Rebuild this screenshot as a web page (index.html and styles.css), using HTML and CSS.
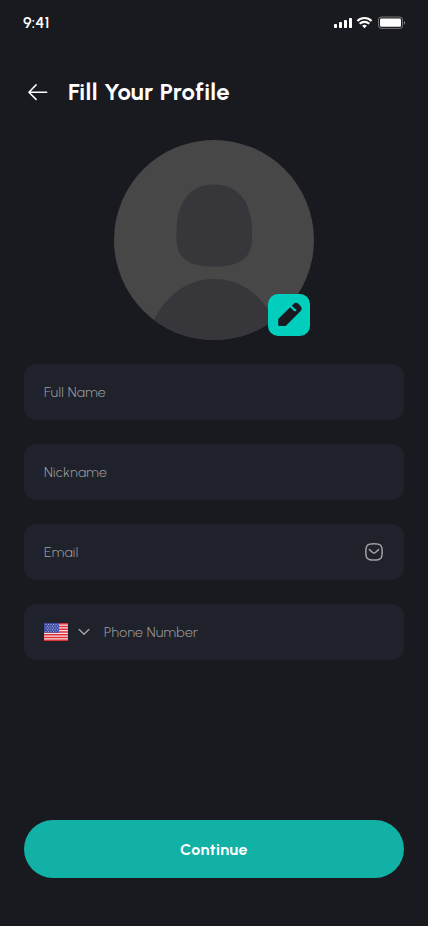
FILE: index.html
```
<!DOCTYPE html>
<html lang="en">
<head>
<meta charset="utf-8">
<meta name="viewport" content="width=device-width, initial-scale=1">
<title>Fill Your Profile</title>
<link rel="stylesheet" href="styles.css">
</head>
<body>
<main class="screen">
  <div class="status">
    <span class="time">9:41</span>
    <svg class="status-icons" width="74" height="14" viewBox="0 0 74 14">
      <g fill="#fff">
        <rect x="1" y="8" width="3" height="4" rx=".7"/>
        <rect x="6" y="6" width="3" height="6" rx=".7"/>
        <rect x="11" y="4" width="3" height="8" rx=".7"/>
        <rect x="16" y="2" width="3" height="10" rx=".7"/>
        <path d="M31.5 12.2 29.1 9.8a3.6 3.6 0 0 1 4.8 0z"/>
      </g>
      <g fill="none" stroke="#fff" stroke-width="2.1">
        <path d="M26.7 7.8a7 7 0 0 1 9.6 0"/>
        <path d="M24.4 4.9a10.3 10.3 0 0 1 14.2 0"/>
      </g>
      <rect x="45.5" y="1" width="24" height="11.4" rx="2.8" fill="none" stroke="#fff" stroke-opacity=".4"/>
      <rect x="47" y="2.6" width="21" height="8.2" rx="1.4" fill="#fff"/>
      <path d="M71 4.9v3.8c1.5-.5 1.5-3.3 0-3.8z" fill="#fff" fill-opacity=".45"/>
    </svg>
  </div>
  <header class="header">
    <svg width="20" height="18" viewBox="0 0 20 18" fill="none" stroke="#fff" stroke-width="1.5" stroke-linecap="round" stroke-linejoin="round"><path d="M18.7 9.2H.9M8.1 1.9.9 9.2l7.2 7.2"/></svg>
    <h1 class="title">Fill Your Profile</h1>
  </header>
  <div class="avatar">
    <svg width="200" height="200" viewBox="0 0 200 200">
      <defs><clipPath id="disc"><circle cx="100" cy="100" r="100"/></clipPath></defs>
      <g clip-path="url(#disc)">
        <rect width="200" height="200" fill="#474748"/>
        <path d="M100 44.5C76 44.5 62.5 62 62.5 92V99C62.5 119 76 126.700 100 126.700S138 119 138 99V92C138 62 124 44.500 100 44.500z" fill="#37363a"/>
        <path d="M38 184C50 157 72 139 100 139s50 18 62 45v16H38z" fill="#37363a"/>
      </g>
    </svg>
    <button class="edit" aria-label="Edit photo">
      <svg width="42" height="42" viewBox="0 0 42 42" fill="#191a1f">
        <path d="M10.2 25.9q0-1 .7-1.700L25.500 9.900q2.600-2.300 5.400.4l1.500 1.600q2.500 2.700 0 5.300L18.200 31.400q-.7.600-1.600.6h-5.200q-1.200 0-1.200-1.200z"/>
        <path d="m22.300 11.700 3.300 3.300q.9 1.200 1.700 1.200" fill="none" stroke="#02cebd" stroke-width="2.300" stroke-linecap="round"/>
      </svg>
    </button>
  </div>
  <form class="form">
    <div class="field"><span class="label">Full Name</span></div>
    <div class="field"><span class="label">Nickname</span></div>
    <div class="field">
      <span class="label">Email</span>
      <svg class="mail" width="20" height="20" viewBox="0 0 20 20" fill="none" stroke="#a2a3a6" stroke-width="1.500" stroke-linecap="round" stroke-linejoin="round"><path d="M10 1.700c6.600 0 8.200 1.600 8.200 8.200s-1.600 8.200-8.200 8.200-8.200-1.600-8.200-8.200S3.400 1.700 10 1.700z"/><path d="m5.400 7.600 3.200 2.900q1.400 1.200 2.800 0l3.200-2.900"/></svg>
    </div>
    <div class="field">
      <svg width="24" height="18" viewBox="0 0 24 18">
        <rect width="24" height="18" fill="#f7dfe0"/>
        <path d="M0 .7h24M0 3.460h24M0 6.230h24M0 9h24M0 11.770h24M0 14.540h24M0 17.310h24" stroke="#df3038" stroke-width="1.390"/>
        <rect width="15" height="9.700" fill="#3f4da5"/>
        <path d="M1.500 1.500h13M3 3.200h11M1.500 4.900h13M3 6.600h11M1.500 8.300h13" stroke="#b7bfe8" stroke-width=".9" stroke-dasharray="1 1.500"/>
      </svg>
      <svg class="chevron" width="12" height="8" viewBox="0 0 12 8" fill="none" stroke="#a2a3a6" stroke-width="1.500" stroke-linecap="round" stroke-linejoin="round"><path d="m1.200 1.500 4.800 4.800 4.800-4.800"/></svg>
      <span class="label">Phone Number</span>
    </div>
  </form>
  <button class="continue">Continue</button>
</main>
</body>
</html>
```
FILE: styles.css
```
* { box-sizing: border-box; }
body { margin: 0; background: #191a1f; }
button { border: 0; padding: 0; font: inherit; }
svg { display: block; flex: none; }
.screen {
  width: 428px;
  height: 926px;
  padding: 0 24px 48px;
  display: flex;
  flex-direction: column;
  background: #191a1f;
  color: #fff;
  font-family: Urbanist, Lato, sans-serif;
}
.status {
  height: 44px;
  margin: 0 -3px 0 -1px;
  display: flex;
  align-items: center;
  justify-content: space-between;
}
.time { font-size: 16px; font-weight: 600; letter-spacing: .1px; }
.status-icons { margin-top: 2px; }
.header {
  height: 48px;
  margin-top: 24px;
  padding-left: 4px;
  display: flex;
  align-items: center;
  gap: 20px;
}
.title { margin: 0; font-size: 24px; line-height: 30px; font-weight: 700; letter-spacing: .34px; white-space: nowrap; }
.avatar { position: relative; width: 200px; height: 200px; margin: 24px auto 0; }
.edit {
  position: absolute;
  left: 154px;
  top: 154px;
  width: 42px;
  height: 42px;
  border-radius: 10px;
  background: #02cebd;
}
.form { margin-top: 24px; display: flex; flex-direction: column; gap: 24px; }
.field {
  height: 56px;
  padding: 0 20px;
  border-radius: 12px;
  background: #1f222a;
  display: flex;
  align-items: center;
}
.label { padding-top: 2px; color: #a0a1a3; font-size: 14px; line-height: 20px; font-weight: 300; letter-spacing: .35px; white-space: nowrap; }
.mail { margin-left: auto; }
.chevron { margin: 0 14px 0 10px; }
.continue {
  height: 58px;
  margin-top: auto;
  border-radius: 29px;
  background: #12b1a6;
  color: #fff;
  font-size: 16px;
  font-weight: 700;
  letter-spacing: .45px;
}
```
